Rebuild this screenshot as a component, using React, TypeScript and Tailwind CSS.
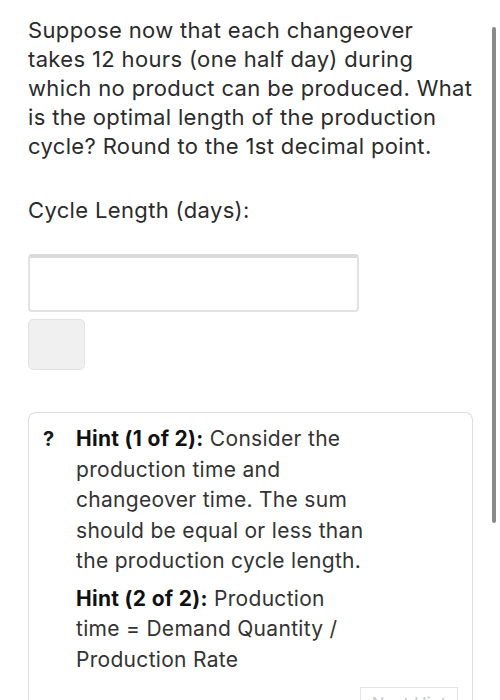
import React from "react";

export default function App() {
  return (
    <div className="relative h-[700px] w-[500px] overflow-hidden bg-white font-['Inter',sans-serif] text-[#2b2b2b]">
      <div className="pl-[28px] pt-[16px] pr-[26px]">
        <p className="text-[22px] leading-[29px] tracking-[0.35px]">
          Suppose now that each changeover takes 12 hours (one half day) during which no product can be produced. What is the optimal length of the production cycle? Round to the 1st decimal point.
        </p>
        <p className="mt-[35px] text-[22px] leading-[29px] tracking-[0.35px]">Cycle Length (days):</p>
        <div className="mt-[29px] h-[58px] w-[331px] rounded-[4px] border-2 border-[#e2e2e2] border-t-[4px] border-t-[#dadada] bg-white" />
        <div className="mt-[7px] h-[51px] w-[57px] rounded-[5px] border border-[#e3e3e3] bg-[#f0f0f0]" />
        <div className="mt-[42px] w-[445px] rounded-t-[8px] border border-b-0 border-[#dedede] pb-[40px]">
          <div className="flex pl-[14px] pt-[11px]">
            <div className="w-[33px] text-[20px] font-bold leading-[30px] text-[#1a1a1a]">?</div>
            <div className="w-[290px] text-[21px] leading-[30.5px] tracking-[0.3px] text-[#333]">
              <p>
                <span className="font-bold text-[#111]">Hint (1 of 2):</span> Consider the production time and changeover time. The sum should be equal or less than the production cycle length.
              </p>
              <p className="mt-[7px]">
                <span className="font-bold text-[#111]">Hint (2 of 2):</span> Production time = Demand Quantity / Production Rate
              </p>
            </div>
          </div>
          <div className="mt-[12px] flex justify-end pr-[14px]">
            <div className="flex h-[36px] w-[98px] items-center justify-center border border-[#e4e4e4] text-[17px] text-[#c8c8c8]">
              Next Hint
            </div>
          </div>
        </div>
      </div>
      <div className="absolute left-[492px] top-[27px] h-[496px] w-[4px] rounded-full bg-[#8a8a8a]" />
    </div>
  );
}
